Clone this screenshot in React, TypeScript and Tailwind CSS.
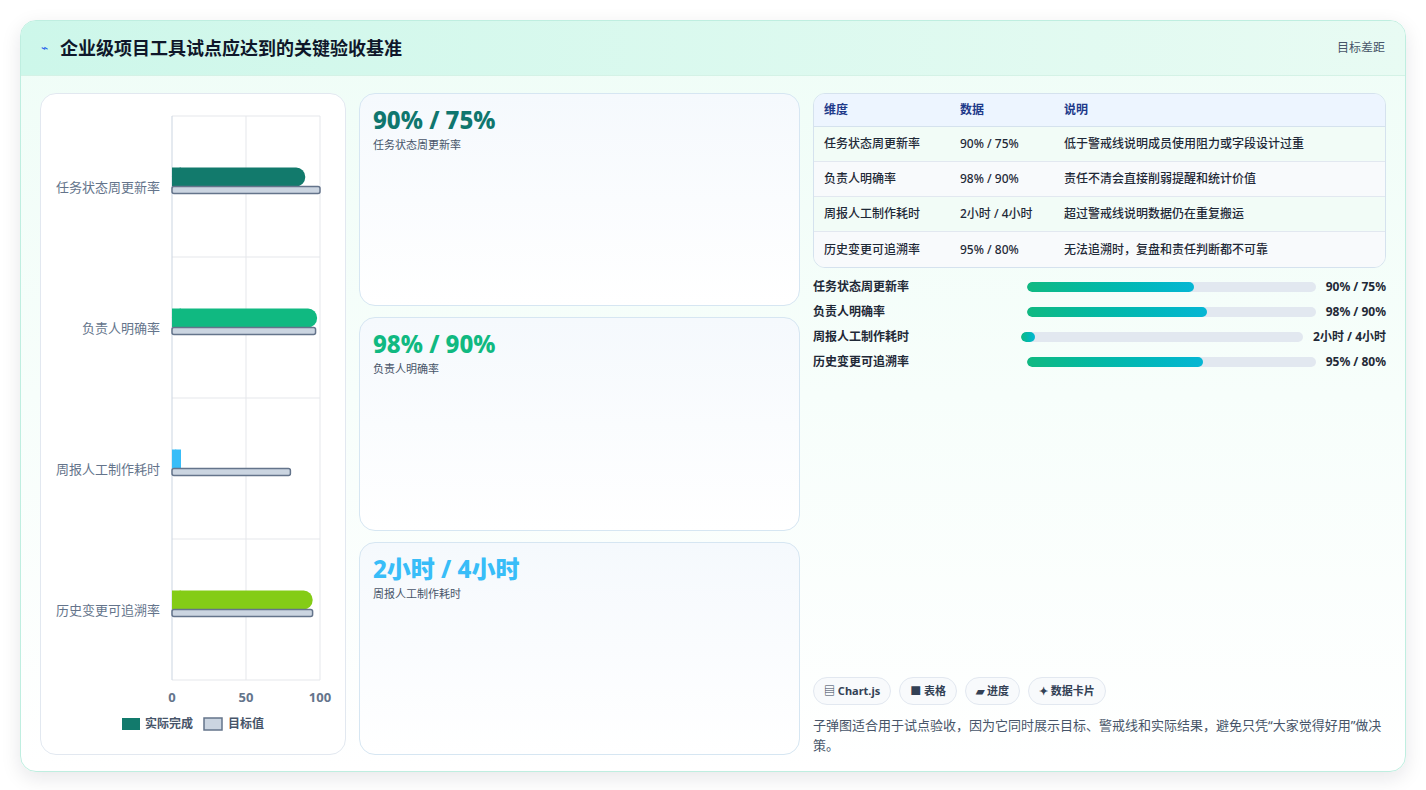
import React from "react"

const rows = [
  { name: "任务状态周更新率", data: "90% / 75%", note: "低于警戒线说明成员使用阻力或字段设计过重", actual: 90, target: 100, color: "#127a6c", fill: 58 },
  { name: "负责人明确率", data: "98% / 90%", note: "责任不清会直接削弱提醒和统计价值", actual: 98, target: 97, color: "#10b981", fill: 62.5 },
  { name: "周报人工制作耗时", data: "2小时 / 4小时", note: "超过警戒线说明数据仍在重复搬运", actual: 5, target: 80, color: "#38bdf8", fill: 5 },
  { name: "历史变更可追溯率", data: "95% / 80%", note: "无法追溯时，复盘和责任判断都不可靠", actual: 95, target: 95, color: "#84cc16", fill: 61 },
]

const cards = [
  { big: "90% / 75%", label: "任务状态周更新率", cls: "text-[#0f766e]" },
  { big: "98% / 90%", label: "负责人明确率", cls: "text-[#10b981]" },
  { big: "2小时 / 4小时", label: "周报人工制作耗时", cls: "text-[#38bdf8]" },
]

function Chart() {
  // plot area in svg coords
  const x0 = 131, w = 148, y0 = 22, rh = 141
  return (
    <svg width="305" height="660" className="block">
      {[0, 1, 2, 3, 4].map(i => (
        <line key={"h" + i} x1={x0} x2={x0 + w} y1={y0 + i * rh} y2={y0 + i * rh} stroke="#e5e7eb" />
      ))}
      {[0, 1, 2].map(i => (
        <line key={"v" + i} x1={x0 + i * 74} x2={x0 + i * 74} y1={y0} y2={y0 + 4 * rh} stroke={i === 0 ? "#cbd5e1" : "#e5e7eb"} />
      ))}
      {rows.map((r, i) => {
        const cy = y0 + i * rh + rh / 2
        return (
          <g key={r.name}>
            <text x={x0 - 12} y={cy + 5} textAnchor="end" fontSize="13" fill="#64748b">{r.name}</text>
            <rect x={x0} y={cy - 19} width={(w * r.actual) / 100} height={19} rx={9} fill={r.color} />
            <rect x={x0} y={cy - 19} width={9} height={19} fill={r.color} />
            <rect x={x0} y={cy} width={(w * r.target) / 100} height={7} rx={2} fill="#cbd5e1" stroke="#64748b" strokeWidth="1.5" />
          </g>
        )
      })}
      {[0, 50, 100].map((v, i) => (
        <text key={v} x={x0 + i * 74} y={y0 + 4 * rh + 22} textAnchor="middle" fontSize="13" fontWeight="bold" fill="#64748b">{v}</text>
      ))}
      <rect x="81" y="624" width="18" height="12" fill="#127a6c" />
      <text x="104" y="634" fontSize="12" fill="#475569" fontWeight="bold">实际完成</text>
      <rect x="163" y="624" width="18" height="12" fill="#cbd5e1" stroke="#64748b" strokeWidth="1.5" />
      <text x="187" y="634" fontSize="12" fill="#475569" fontWeight="bold">目标值</text>
    </svg>
  )
}

export default function App() {
  return (
    <div className="w-[1426px] h-[790px] bg-white p-5 pb-4" style={{ fontFamily: '"Noto Sans", "Noto Sans CJK SC", sans-serif' }}>
      <div className="h-[752px] rounded-2xl border border-[#bfeee0] shadow-[0_6px_20px_rgba(15,23,42,0.10)] overflow-hidden flex flex-col bg-gradient-to-b from-[#effdf7] to-white">
        <div className="h-[55px] shrink-0 flex items-center justify-between px-5 bg-gradient-to-r from-[#cdf7ea] to-[#e8fbf3] border-b border-[#d4f2e6]">
          <div className="flex items-center gap-3">
            <span className="text-[#2563eb] text-xs">⌁</span>
            <h1 className="text-[18px] font-bold text-[#0f172a]">企业级项目工具试点应达到的关键验收基准</h1>
          </div>
          <span className="text-[12px] text-[#475569]">目标差距</span>
        </div>
        <div className="flex-1 flex gap-[13px] px-[19px] pt-[17px] pb-[18px]">
          <div className="w-[306px] shrink-0 bg-white rounded-2xl border border-[#e2e8f0]">
            <Chart />
          </div>
          <div className="w-[441px] shrink-0 flex flex-col gap-[11px]">
            {cards.map(c => (
              <div key={c.label} className="flex-1 rounded-2xl border border-[#d6e6f2] bg-gradient-to-b from-[#f5f9fd] to-white px-[13px] pt-[10px]">
                <div className={`text-[24px] font-extrabold leading-[32px] ${c.cls}`}>{c.big}</div>
                <div className="text-[11px] text-[#475569] mt-[1px]">{c.label}</div>
              </div>
            ))}
          </div>
          <div className="flex-1 flex flex-col">
            <div className="rounded-xl border border-[#d5e2ee] overflow-hidden text-[12px]">
              <div className="flex h-[33px] items-center bg-[#edf5ff] border-b border-[#d5e2ee] font-bold text-[#1e3a8a]">
                <div className="w-[146px] pl-[10px]">维度</div>
                <div className="w-[104px]">数据</div>
                <div>说明</div>
              </div>
              {rows.map((r, i) => (
                <div key={r.name} className={`flex h-[35px] items-center text-[#1f2937] font-medium ${i < 3 ? "border-b border-[#e2e8f0]" : ""} ${i % 2 === 0 ? "bg-[#f2fcf7]" : "bg-[#f8fafc]"}`}>
                  <div className="w-[146px] pl-[10px]">{r.name}</div>
                  <div className="w-[104px]">{r.data}</div>
                  <div>{r.note}</div>
                </div>
              ))}
            </div>
            <div className="mt-[9px] flex flex-col gap-[6px]">
              {rows.map(r => (
                <div key={r.name} className="flex items-center h-[19px] gap-[10px] text-[12px] font-semibold text-[#1f2937]">
                  <div className="grow-[1] basis-0 whitespace-nowrap">{r.name}</div>
                  <div className="grow-[1.42] basis-0 h-[10px] rounded-full bg-[#e2e8f0] overflow-hidden">
                    <div className="h-full rounded-full bg-gradient-to-r from-[#10b981] to-[#06b6d4]" style={{ width: `${r.fill}%` }} />
                  </div>
                  <div className="whitespace-nowrap font-bold">{r.data}</div>
                </div>
              ))}
            </div>
            <div className="flex-1" />
            <div className="flex gap-[8px]">
              {["▤ Chart.js", "■ 表格", "▰ 进度", "✦ 数据卡片"].map(t => (
                <span key={t} className="h-[28px] px-[10px] flex items-center rounded-full border border-[#e2e8f0] bg-[#f8fafc] text-[11px] font-bold text-[#334155]">{t}</span>
              ))}
            </div>
            <p className="mt-[10px] text-[13px] leading-[20px] text-[#475569] pr-[2px]">子弹图适合用于试点验收，因为它同时展示目标、警戒线和实际结果，避免只凭“大家觉得好用”做决策。</p>
          </div>
        </div>
      </div>
    </div>
  )
}
